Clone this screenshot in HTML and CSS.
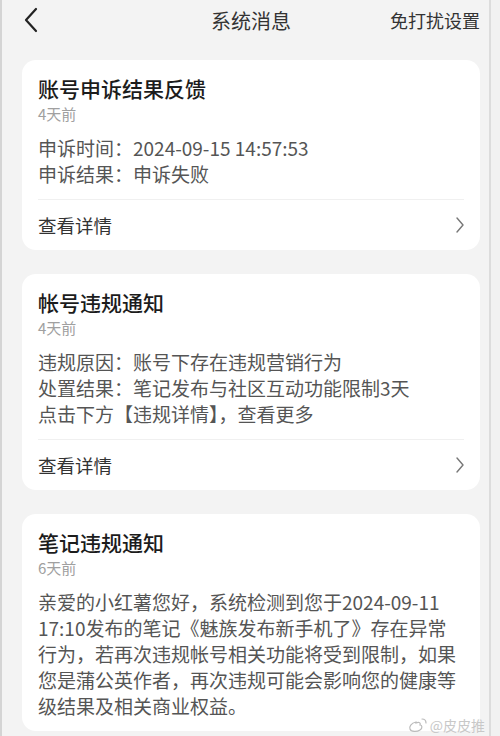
FILE: index.html
```html
<!DOCTYPE html>
<html>
  <head>
    <title>系统消息</title>
    <link rel="stylesheet" href="styles.css">
  </head>
  <body>
    <div class="screen">
      <div class="header">
        <span class="back">
          <svg width="14" height="26" viewBox="0 0 14 26">
            <path d="M12 2 L2 13 L12 24" fill="none" stroke="#222" stroke-width="2.2" stroke-linecap="round" stroke-linejoin="round"/>
          </svg>
        </span>
        <h1 class="title">系统消息</h1>
        <span class="action">免打扰设置</span>
      </div>

      <div class="card">
        <h2 class="card-title">账号申诉结果反馈</h2>
        <div class="card-time">4天前</div>
        <div class="card-body">
          <p>申诉时间：2024-09-15 14:57:53</p>
          <p>申诉结果：申诉失败</p>
        </div>
        <div class="card-footer">
          <span>查看详情</span>
          <svg class="arrow" width="10" height="18" viewBox="0 0 10 18">
            <path d="M2 2 L8 9 L2 16" fill="none" stroke="#777" stroke-width="1.4" stroke-linecap="round" stroke-linejoin="round"/>
          </svg>
        </div>
      </div>

      <div class="card">
        <h2 class="card-title">帐号违规通知</h2>
        <div class="card-time">4天前</div>
        <div class="card-body">
          <p>违规原因：账号下存在违规营销行为</p>
          <p>处置结果：笔记发布与社区互动功能限制3天</p>
          <p>点击下方【违规详情】，查看更多</p>
        </div>
        <div class="card-footer">
          <span>查看详情</span>
          <svg class="arrow" width="10" height="18" viewBox="0 0 10 18">
            <path d="M2 2 L8 9 L2 16" fill="none" stroke="#777" stroke-width="1.4" stroke-linecap="round" stroke-linejoin="round"/>
          </svg>
        </div>
      </div>

      <div class="card card-last">
        <h2 class="card-title">笔记违规通知</h2>
        <div class="card-time">6天前</div>
        <div class="card-body">
          <p>亲爱的小红薯您好，系统检测到您于2024-09-11 17:10发布的笔记《魅族发布新手机了》存在异常行为，若再次违规帐号相关功能将受到限制，如果您是蒲公英作者，再次违规可能会影响您的健康等级结果及相关商业权益。</p>
        </div>
      </div>

      <div class="watermark">
        <svg width="20" height="16" viewBox="0 0 20 16">
          <path d="M8 5 C3 6 1 10 2 12 C3 15 9 15 12 13 C15 11 14 8 12 8 C13 5 10 5 8 6 Z" fill="none" stroke="#bbb" stroke-width="1.2"/>
          <path d="M14 2 C16 2 18 3 18 6" fill="none" stroke="#bbb" stroke-width="1.2" stroke-linecap="round"/>
        </svg>
        <span>@皮皮推</span>
      </div>
    </div>
  </body>
</html>
```

FILE: styles.css
```css
body {
  margin: 0;
  background: #f1f1f1;
  font-family: "Noto Sans CJK SC", "Noto Sans", sans-serif;
}
.screen {
  position: relative;
  width: 491px;
  height: 736px;
  overflow: hidden;
  background: #f3f3f3;
  border-left: 2px solid #d4d4d4;
  border-right: 2px solid #dcdcdc;
  padding: 0 9px 0 20px;
  box-sizing: border-box;
}
.header {
  display: flex;
  align-items: center;
  justify-content: space-between;
  height: 40px;
  margin-bottom: 20px;
  position: relative;
}
.back {
  display: flex;
  padding-left: 2px;
}
.title {
  position: absolute;
  left: 0;
  right: 0;
  text-align: center;
  margin: 0;
  font-size: 20px;
  font-weight: 400;
  color: #333;
  pointer-events: none;
}
.action {
  font-size: 18px;
  color: #333;
}
.card {
  background: #fff;
  border-radius: 14px;
  padding: 16px 16px 0 16px;
  margin-bottom: 24px;
}
.card-title {
  margin: 0;
  font-size: 21px;
  line-height: 24px;
  font-weight: 500;
  color: #1c1c1c;
}
.card-time {
  margin-top: 4px;
  font-size: 15px;
  line-height: 20px;
  color: #a0a0a0;
}
.card-body {
  margin-top: 11px;
  padding-right: 4px;
  font-size: 19px;
  line-height: 26px;
  color: #555;
}
.card-body p {
  margin: 0;
}
.card-footer {
  margin-top: 12px;
  border-top: 1px solid #f0f0f0;
  height: 50px;
  display: flex;
  align-items: center;
  justify-content: space-between;
  font-size: 18.5px;
  color: #333;
}
.arrow {
  margin-right: -1px;
}
.card-last {
  padding-bottom: 12px;
}
/* weibo watermark sits over the bottom of the last card */
.watermark {
  position: absolute;
  right: 4px;
  bottom: 3px;
  display: flex;
  align-items: center;
  gap: 2px;
  font-size: 14px;
  line-height: 14px;
  color: #c8c8c8;
  text-shadow: 0 0 1px #fff;
}
```
